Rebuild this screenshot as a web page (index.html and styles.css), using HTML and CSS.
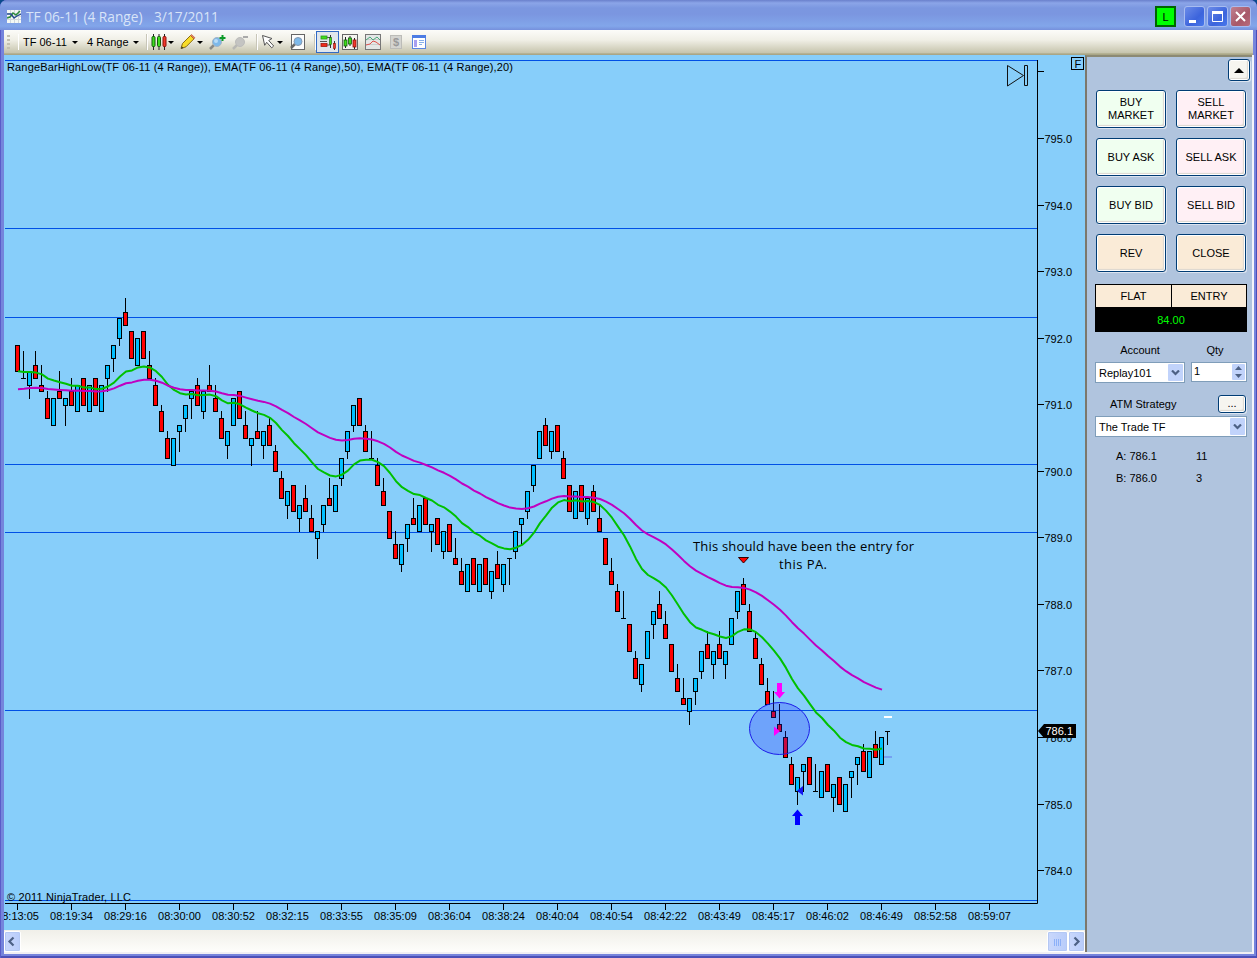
FILE: index.html
```html
<!DOCTYPE html>
<html lang="en">
<head>
    <meta charset="UTF-8">
    <title>TF 06-11 (4 Range) 3/17/2011</title>
    <link rel="stylesheet" href="styles.css">
</head>
<body>
    <div class="window">
        <div class="titlebar">
            <svg class="app-icon" width="14" height="13" viewBox="0 0 14 13">
                <rect width="14" height="13" fill="#f4f8f4"/>
                <path d="M0 3.5h14M0 6.5h14M0 9.5h14M3.5 0v13M7.5 0v13M11.5 0v13" stroke="#d0d8dc" fill="none"/>
                <path d="M0 8l3-1 3-4 3 2 4-4" stroke="#2c8a3a" stroke-width="1.5" fill="none"/>
                <path d="M0 4h4l3 4 3-2 4-2" stroke="#234a8c" stroke-width="1.3" fill="none"/>
            </svg>
            <span class="title">TF 06-11 (4 Range)</span>
            <span class="title title-date">3/17/2011</span>
            <div class="link-box">L</div>
            <div class="win-btn"><svg width="19" height="19"><rect x="4" y="13" width="7" height="3" fill="#fff"/></svg></div>
            <div class="win-btn"><svg width="19" height="19"><path d="M4.5 5v9.5h10V5" fill="none" stroke="#fff"/><rect x="4" y="4" width="11" height="3" fill="#fff"/></svg></div>
            <div class="win-btn win-close"><svg width="19" height="19"><path d="M5 5l9 9M14 5l-9 9" stroke="#fff" stroke-width="2"/></svg></div>
        </div>

        <div class="toolbar">
            <div class="grip"></div>
            <div class="sep sep-first"></div>
            <span class="tool-text instrument">TF 06-11</span>
            <i class="caret"></i>
            <span class="tool-text interval">4 Range</span>
            <i class="caret"></i>
            <div class="sep sep-a"></div>
            <svg class="ic-bars" width="16" height="18" viewBox="0 0 16 18">
                <path d="M2.500 1v16M8 1v16M13.500 1v16" stroke="#222"/>
                <rect x="1" y="3.500" width="3" height="10" rx="1" fill="#3fdc1c" stroke="#145a0c"/>
                <rect x="6.500" y="3.500" width="3" height="10" rx="1" fill="#3fdc1c" stroke="#145a0c"/>
                <rect x="12" y="3.500" width="3" height="10" rx="1" fill="#f03a2c" stroke="#8c1008"/>
            </svg>
            <i class="caret caret-tight"></i>
            <svg class="ic-pencil" width="16" height="16" viewBox="0 0 16 16">
                <path d="M1 14.500l1.500-5 8-8 3.500 3.300-8 8z" fill="#f8dc28" stroke="#8a6c10"/>
                <path d="M10.500 1.500l1-1 3.500 3.300-1 1z" fill="#ee8a60" stroke="#b05030" stroke-width=".6"/>
                <path d="M1 14.800l.8-2.600 1.700 1.700z" fill="#333"/>
            </svg>
            <i class="caret caret-tight"></i>
            <svg class="ic-zoom" width="17" height="17" viewBox="0 0 17 17">
                <path d="M1 15l4-4" stroke="#8a8a86" stroke-width="2.500"/>
                <circle cx="8" cy="8" r="4.500" fill="#7db9ea" stroke="#a4b4c4"/>
                <circle cx="7" cy="7" r="2" fill="#b8dcf8"/>
                <path d="M13.500 1v6M10.500 4h6" stroke="#0c9a28" stroke-width="2"/>
            </svg>
            <svg class="ic-zoom-out" width="17" height="17" viewBox="0 0 17 17">
                <path d="M1 15l4-4" stroke="#b8b8b4" stroke-width="2.500"/>
                <circle cx="8" cy="8" r="4.500" fill="#c4c4c2" stroke="#bcbcba"/>
                <path d="M11 3h5" stroke="#aaa" stroke-width="2"/>
            </svg>
            <div class="sep sep-b"></div>
            <svg class="ic-cursor" width="15" height="16" viewBox="0 0 15 16">
                <path d="M1.500 1.500l9.500 3-3.300 2 5 5.500-2 1.800-5-5.500-2 3z" fill="#fff" stroke="#555"/>
            </svg>
            <i class="caret"></i>
            <svg class="ic-page" width="15" height="16" viewBox="0 0 15 16">
                <rect x="1.500" y=".5" width="13" height="15" fill="#fcfcfc" stroke="#666"/>
                <path d="M1 14l4-4" stroke="#666" stroke-width="2.500"/>
                <circle cx="8" cy="7.500" r="4" fill="#7db9ea" stroke="#8498b0"/>
            </svg>
            <div class="sep sep-c"></div>
            <div class="tool-active">
                <svg width="18" height="18" viewBox="0 0 18 18">
                    <rect x="2" y="3" width="6" height="3" fill="#3fdc1c" stroke="#2a9c18" stroke-width=".8"/>
                    <rect x="2" y="10.500" width="6" height="3" fill="#f02a1c" stroke="#a01810" stroke-width=".8"/>
                    <path d="M8 4.500h4M8 12h4M1 8.500h7" stroke="#555"/>
                    <path d="M11.500 2v13M15.500 8v9" stroke="#333"/>
                    <rect x="10.500" y="4.500" width="2" height="7" fill="#3fdc1c" stroke="#145a0c" stroke-width=".6"/>
                    <rect x="14.500" y="10.500" width="2" height="5" fill="#f03a2c" stroke="#8c1008" stroke-width=".6"/>
                </svg>
            </div>
            <svg class="ic-chart" width="16" height="16" viewBox="0 0 16 16">
                <rect x=".5" y=".5" width="15" height="15" fill="#f4f4f0" stroke="#666"/>
                <path d="M3.500 3v11M8 2v10M12.500 4v11" stroke="#222"/>
                <rect x="2" y="6" width="3" height="6" fill="#3fdc1c" stroke="#145a0c" stroke-width=".8"/>
                <rect x="6.500" y="4" width="3" height="6" fill="#3fdc1c" stroke="#145a0c" stroke-width=".8"/>
                <rect x="11" y="6" width="3" height="7" fill="#f03a2c" stroke="#8c1008" stroke-width=".8"/>
            </svg>
            <svg class="ic-chart" width="16" height="16" viewBox="0 0 16 16">
                <rect x=".5" y=".5" width="15" height="15" fill="#e4e6e6" stroke="#777"/>
                <path d="M1 5.500h14M1 10.500h14" stroke="#ccc"/>
                <path d="M1 6l4-3 3 3 4-3 3 3" stroke="#4ba878" fill="none"/>
                <path d="M1 11l4-1 3-3 3 1 4 3" stroke="#e0504c" fill="none"/>
            </svg>
            <svg class="ic-chart" width="16" height="16" viewBox="0 0 16 16">
                <rect x="2.500" y="1.500" width="11" height="13" fill="#d4d4d0" stroke="#bcbcb8"/>
                <text class="dollar" x="8" y="12" text-anchor="middle">$</text>
            </svg>
            <svg class="ic-chart" width="16" height="16" viewBox="0 0 16 16">
                <rect x="1.500" y="1.500" width="13" height="13" fill="#fff" stroke="#5c86e0"/>
                <rect x="1" y="1" width="14" height="3" fill="#4c7ce4"/>
                <rect x="3" y="6" width="3" height="7" fill="#a8a0f0"/>
                <path d="M8 6.500h5M8 8.500h5M8 10.500h3" stroke="#88b0e8"/>
            </svg>
        </div>

        <div class="content">
            <div class="chart-pane">
                <svg class="chart" width="1081" height="875" viewBox="4 55 1081 875">
                    <g id="levels" class="level"></g>
                    <g id="axes" class="axis"></g>
                    <g id="labels" class="label"></g>
                    <g id="bars"></g>
                    <polyline id="ema20" class="ema ema-fast"/>
                    <polyline id="ema50" class="ema ema-slow"/>

                    <text class="label" x="7" y="71" textLength="506">RangeBarHighLow(TF 06-11 (4 Range)), EMA(TF 06-11 (4 Range),50), EMA(TF 06-11 (4 Range),20)</text>
                    <text class="label" x="7" y="901" textLength="124">© 2011 NinjaTrader, LLC</text>

                    <!-- trade annotations -->
                    <text class="note" x="693" y="551" textLength="221">This should have been the entry for</text>
                    <text class="note" x="779" y="569" textLength="48">this PA.</text>
                    <path d="M738.500 557.500h10l-5 5.500z" fill="#f00" stroke="#300"/>
                    <ellipse cx="779.500" cy="728.500" rx="30" ry="26" fill="#2424ff" fill-opacity=".25" stroke="#1c1ce8"/>
                    <path d="M777 683h5v9h3l-5.500 6.500-5.500-6.500h3z" fill="#f0f"/>
                    <path d="M774 726.500v9.500l6-4.700z" fill="#f0f"/>
                    <path d="M803 786v9.500l-6-4.700z" fill="#1414f0"/>
                    <path d="M795 825h5v-9h3l-5.500-6.500-5.500 6.500h3z" fill="#00f"/>
                    <path d="M884 717h8" stroke="#fff" stroke-width="2"/>
                    <path d="M884 757h8" stroke="#6f92ee" stroke-width="1.500"/>

                    <!-- last price -->
                    <path d="M1038 731l6-7h32v14h-32z"/>
                    <text class="label last-price" x="1045.500" y="735">786.1</text>

                    <path d="M1007.500 65.500v20.500l16-10.500zM1024.500 65.500h3v20h-3z" fill="none" stroke="#111"/>
                    <rect x="1071.500" y="57.500" width="12" height="12" fill="none" stroke="#000"/>
                    <text class="label" x="1074.500" y="68">F</text>
                </svg>
                <div class="scrollbar">
                    <div class="scroll-btn"><svg width="15" height="19"><path d="M8.500 5.500l-4 4 4 4" fill="none" stroke="#4d6185" stroke-width="2.200"/></svg></div>
                    <div class="track"></div>
                    <div class="scroll-btn thumb"><svg width="19" height="19"><path d="M6.500 7v7M8.500 7v7M10.500 7v7M12.500 7v7" stroke="#8cb0f8"/></svg></div>
                    <div class="scroll-btn"><svg width="15" height="19"><path d="M5.500 5.500l4 4-4 4" fill="none" stroke="#4d6185" stroke-width="2.200"/></svg></div>
                </div>
            </div>

            <div class="trader">
                <div class="collapse-row"><div class="btn collapse"><svg width="10" height="5"><path d="M0 5l5-5 5 5z"/></svg></div></div>
                <div class="orders">
                    <div class="btn buy">BUY<br>MARKET</div>
                    <div class="btn sell">SELL<br>MARKET</div>
                    <div class="btn buy">BUY ASK</div>
                    <div class="btn sell">SELL ASK</div>
                    <div class="btn buy">BUY BID</div>
                    <div class="btn sell">SELL BID</div>
                    <div class="btn neutral">REV</div>
                    <div class="btn neutral">CLOSE</div>
                </div>
                <div class="position">
                    <div class="cell">FLAT</div>
                    <div class="cell">ENTRY</div>
                    <div class="pnl">84.00</div>
                </div>
                <div class="row captions">
                    <span class="cap-account">Account</span>
                    <span class="cap-qty">Qty</span>
                </div>
                <div class="row">
                    <div class="field account"><span>Replay101</span><div class="drop"><svg width="9" height="6"><path d="M1 .5l3.500 3.500 3.500-3.500" fill="none" stroke="#4d6185" stroke-width="2.200"/></svg></div></div>
                    <div class="field qty"><span>1</span><div class="drop spin"><svg width="9" height="14"><path d="M1 5l3.500-4 3.500 4zM1 9l3.500 4 3.500-4z" fill="#4d6185"/></svg></div></div>
                </div>
                <div class="row atm-row">
                    <span>ATM Strategy</span>
                    <div class="btn more">...</div>
                </div>
                <div class="field"><span>The Trade TF</span><div class="drop"><svg width="9" height="6"><path d="M1 .5l3.500 3.500 3.500-3.500" fill="none" stroke="#4d6185" stroke-width="2.200"/></svg></div></div>
                <div class="quotes">
                    <span>A: 786.1</span><span>11</span>
                    <span>B: 786.0</span><span>3</span>
                </div>
            </div>
        </div>
    </div>

    <script src="chart.js"></script>
</body>
</html>
```
FILE: chart.js
```js
// Range bars as [open, close], in ticks (0.1) above 785.0.
// A bar always spans 4 ticks and closes on its high or its low.
// The last bar is still open, its third value is the low so far.
const bars = [
    [69,65],[64,64],[63,65],[66,64],[63,62],[61,58],[57,61],[62,61],[60,61],[62,60],
    [59,63],[64,60],[59,63],[64,60],[59,63],[64,66],[67,69],[70,73],[74,72],[71,67],
    [66,70],[71,67],[66,64],[63,60],[59,56],[55,52],[51,55],[56,57],[58,60],[61,62],
    [63,60],[59,62],[63,62],[61,59],[58,55],[54,56],[57,61],[62,58],[57,55],[54,55],
    [56,55],[54,56],[57,54],[53,50],[49,46],[45,47],[48,44],[43,45],[46,44],[43,41],
    [40,41],[42,45],[46,45],[44,48],[49,52],[53,56],[57,60],[61,57],[56,53],[52,52],
    [51,48],[47,45],[44,40],[39,37],[36,39],[40,42],[43,42],[41,45],[46,42],[41,42],
    [43,39],[38,41],[42,38],[37,36],[35,33],[32,36],[37,33],[32,36],[37,33],[32,35],
    [36,34],[33,36],[37,37,33],[38,41],[42,43],[44,47],[48,51],[52,56],[57,54],[53,56],
    [57,53],[52,49],[48,44],[43,47],[48,44],[43,46],[47,44],[43,41],[40,36],[35,33],
    [32,29],[28,28],[27,23],[22,19],[18,21],[22,26],[27,29],[30,28],[27,25],[24,20],
    [19,17],[16,15],[14,16],[17,19],[20,23],[24,22],[21,23],[24,22],[21,23],[24,28],
    [29,32],[33,30],[29,26],[25,22],[21,18],[17,15],[14,13],[12,11],[10,7],[6,3],
    [2,4],[5,6],[7,3],[2,2],[1,5],[6,2],[1,3],[4,0],[-1,3],[4,5],
    [6,7],[8,5],[4,8],[9,7],[6,10],[11,11,9]
];
const times = ['08:13:05', '08:19:34', '08:29:16', '08:30:00', '08:30:52', '08:32:15',
    '08:33:55', '08:35:09', '08:36:04', '08:38:24', '08:40:04', '08:40:54', '08:42:22',
    '08:43:49', '08:45:17', '08:46:02', '08:46:49', '08:52:58', '08:59:07'];
const levels = [60, 228, 317, 464, 532, 710, 900];

const rawY = t => 804 - 6.655 * t;
const y = t => Math.round(rawY(t)) + 0.5;
const x = i => 17.5 + 6 * i;

function add(parent, tag, attrs, text) {
    const el = document.createElementNS('http://www.w3.org/2000/svg', tag);
    for (const k in attrs) el.setAttribute(k, attrs[k]);
    if (text) el.textContent = text;
    document.getElementById(parent).appendChild(el);
}

levels.forEach(l => add('levels', 'path', { d: `M5 ${l + 0.5}H1037` }));

// axes
add('axes', 'path', { d: 'M1037.5 60V903.5H5' });
for (let p = 784; p <= 796; p++) {
    const py = Math.floor(rawY((p - 785) * 10)) + 0.5;
    add('axes', 'path', { d: `M1038 ${py}h6` });
    if (p < 796) add('labels', 'text', { x: 1044.5, y: py + 4 }, p.toFixed(1));
}
times.forEach((t, k) => {
    add('axes', 'path', { d: `M${x(9 * k)} 904v6` });
    add('labels', 'text', { x: x(9 * k), y: 920, 'text-anchor': 'middle' }, t);
});

// bars
bars.forEach(([open, close, lowest], i) => {
    const up = close > open || lowest !== undefined;
    const high = up ? close : close + 4;
    const low = lowest !== undefined ? lowest : high - 4;
    add('bars', 'path', { class: 'wick', d: `M${x(i)} ${y(high) - 0.5}V${y(low) + 0.5}` });
    if (open === close) {
        add('bars', 'path', { class: 'wick', d: `M${x(i) - 2.5} ${y(open)}h5` });
    } else {
        const top = y(Math.max(open, close));
        add('bars', 'rect', {
            class: up ? 'up' : 'down', x: x(i) - 2, y: top, width: 4,
            height: y(Math.min(open, close)) - top
        });
    }
});

// moving averages
function ema(id, period, seed) {
    let v = seed;
    const points = [];
    for (let i = 0; i < bars.length - 1; i++) {
        if (i > 0) v += (bars[i][1] - v) * 2 / (period + 1);
        points.push(`${x(i) + 0.5},${(rawY(v) + 0.5).toFixed(1)}`);
    }
    document.getElementById(id).setAttribute('points', points.join(' '));
}
ema('ema20', 20, 65.1);
ema('ema50', 50, 62.4);
```
FILE: styles.css
```css
* {
    box-sizing: border-box;
}
body {
    margin: 0;
    background: #0a4a8c;
    font-family: "Liberation Sans", Arial, sans-serif;
    font-size: 11px;
    color: #000;
}
.window {
    width: 1257px;
    height: 958px;
    display: flex;
    flex-direction: column;
    background: #7584dc;
    border-radius: 7px 7px 0 0;
    box-shadow: inset 1px 0 #5a5cc8, inset -1px 0 #4a4cb8, inset 0 -2px #4c50b8;
    overflow: hidden;
}

/* title bar */
.titlebar {
    height: 30px;
    flex: none;
    display: flex;
    align-items: center;
    padding: 3px 6px 0 7px;
    background: linear-gradient(#6a80cc, #8ba5e8 3px, #7b97e0 8px, #7b96e0 14px, #82a6ea 26px, #7690dc 30px);
}
.app-icon {
    margin-right: 5px;
}
.title {
    font-family: "Open Sans", sans-serif;
    font-weight: 500;
    font-size: 13.7px;
    width: 128px;
    white-space: nowrap;
    color: #d8e4f8;
}
.title-date {
    flex: 1;
}
.link-box {
    width: 21px;
    height: 21px;
    border: 2px solid #006400;
    background: #0f0;
    text-align: center;
    line-height: 18px;
    margin-right: 6px;
}
.win-btn {
    width: 21px;
    height: 21px;
    margin-left: 2px;
    border: 1px solid #a8bcf0;
    border-radius: 3px;
    background: linear-gradient(135deg, #6c8ce8, #3c64dc 60%, #4878ec);
}
.win-btn svg {
    display: block;
}
.win-close {
    background: linear-gradient(135deg, #c08090, #a85868 60%, #b86c7c);
}

/* toolbar */
.toolbar {
    height: 26px;
    flex: none;
    margin: 0 4px 0 4px;
    padding: 0 0 2px 3px;
    display: flex;
    align-items: center;
    background: linear-gradient(#fcfcf9, #f0efe6 10px, #c6c4ac 23px, #a29f7c 24px, #b0ad90 25px);
}
.toolbar > * {
    flex: none;
}
.grip {
    width: 3px;
    height: 14px;
    background: repeating-linear-gradient(#c4c0b0 0 2px, transparent 2px 4px);
}
.sep {
    width: 1px;
    height: 16px;
    background: #c8c6b8;
    box-shadow: 1px 0 #fff;
}
.sep-first { margin-left: 7px; background: none; }
.sep-a { margin: 0 4px 0 7px; }
.sep-b { margin: 0 4px 0 7px; }
.sep-c { margin: 0 1px 0 9px; }
.tool-text {
    white-space: nowrap;
}
.instrument {
    margin-left: 5px;
    width: 49px;
}
.interval {
    margin-left: 9px;
    width: 46px;
}
.caret {
    border: 3px solid transparent;
    border-top-color: #000;
    border-bottom: 0;
    width: 6px;
}
.caret-tight {
    margin-left: 1px;
}
.ic-pencil { margin-left: 6px; }
.ic-zoom { margin-left: 6px; }
.ic-zoom-out { margin-left: 6px; }
.ic-cursor + .caret { margin-left: 1px; }
.ic-page { margin-left: 7px; }
.ic-chart { margin-left: 3px; }
.ic-chart + .ic-chart { margin-left: 7px; }
.dollar {
    font-weight: bold;
    font-size: 11px;
    fill: #999;
}
.tool-active {
    width: 23px;
    height: 22px;
    border: 1px solid #316ac5;
    background: #e0e6ec;
    padding: 1px 2px;
}

/* chart */
.content {
    flex: 1;
    display: flex;
    margin: -1px 3px 4px 4px;
    min-height: 0;
    border-right: 2px solid #f4f4fa;
    border-bottom: 2px solid #f0eff4;
}
.chart-pane {
    width: 1081px;
    flex: none;
    display: flex;
    flex-direction: column;
}
.chart {
    display: block;
    flex: none;
    background: #87cefa;
}
.level {
    stroke: #0050e6;
}
.axis {
    stroke: #000;
    fill: none;
}
.label {
    font-size: 11px;
}
.note {
    font-family: "Open Sans", sans-serif;
    font-size: 13px;
}
.last-price {
    fill: #fff;
}
.wick {
    stroke: #000;
}
.up {
    fill: #00bfff;
    stroke: #000;
}
.down {
    fill: #f00;
    stroke: #000;
}
.ema {
    fill: none;
    stroke-width: 2;
    stroke-linejoin: round;
}
.ema-fast {
    stroke: #00c000;
}
.ema-slow {
    stroke: #c000c0;
}

/* scrollbar */
.scrollbar {
    flex: 1;
    display: flex;
    align-items: center;
    background: linear-gradient(#f0efe9, #fefefb);
}
.track {
    flex: 1;
}
.scroll-btn {
    width: 17px;
    height: 21px;
    border: 1px solid #fff;
    border-radius: 2px;
    background: linear-gradient(90deg, #cad8fc, #b8ccfa);
    box-shadow: inset 0 0 0 1px #b4c8f4;
}
.scroll-btn svg {
    display: block;
}
.thumb {
    width: 21px;
}

/* order entry */
.trader {
    flex: 1;
    padding: 2px 5px 0 8px;
    background: #b0c4de;
    border-left: 2px solid #7c786c;
    border-top: 2px solid #8c8a74;
}
.btn {
    display: flex;
    align-items: center;
    justify-content: center;
    text-align: center;
    line-height: 13px;
    border: 1px solid #003c74;
    border-radius: 3px;
    background: #f6f5f0;
    box-shadow: inset 0 0 0 1px #fff, inset -2px -2px 1px #dcd8d0, 1px 1px #dce4f0;
}
.collapse-row {
    display: flex;
    justify-content: flex-end;
    margin-right: -3px;
}
.collapse {
    width: 22px;
    height: 22px;
}
.orders {
    display: grid;
    grid-template-columns: 70px 70px;
    grid-auto-rows: 38px;
    gap: 10px;
    margin: 9px 0 0 1px;
}
.buy { background: #f0fff0; }
.sell { background: #fff0f5; }
.neutral { background: #faebd7; }
.position {
    display: grid;
    grid-template-columns: 75px 74px;
    grid-template-rows: 22px 23px;
    gap: 1px;
    width: 152px;
    margin-top: 12px;
    border: 1px solid #000;
    background: #000;
    text-align: center;
    line-height: 23px;
}
.cell {
    background: #faebd7;
}
.pnl {
    grid-column: 1 / 3;
    color: #0f0;
    line-height: 25px;
}
.row {
    display: flex;
    width: 152px;
    gap: 6px;
}
.captions {
    height: 30px;
    line-height: 36px;
    gap: 0;
}
.cap-account {
    width: 90px;
    text-align: center;
}
.cap-qty {
    width: 60px;
    text-align: center;
}
.field {
    display: flex;
    justify-content: space-between;
    width: 152px;
    height: 21px;
    border: 1px solid #7f9db9;
    background: #fff;
    padding: 1px 1px 1px 3px;
    line-height: 18px;
}
.account {
    width: 90px;
}
.qty {
    width: 56px;
    height: 20px;
    padding-left: 2px;
    line-height: 15px;
}
.drop {
    display: flex;
    align-items: center;
    justify-content: center;
    width: 15px;
    border-radius: 1px;
    background: #c1d3fb;
}
.spin {
    width: 13px;
}
.atm-row {
    justify-content: space-between;
    align-items: center;
    height: 33px;
    padding: 9px 1px 0 15px;
}
.more {
    width: 28px;
    height: 18px;
    margin-top: -1px;
}
.quotes {
    display: grid;
    grid-template-columns: 80px 40px;
    grid-auto-rows: 22px;
    line-height: 22px;
    margin: 8px 0 0 21px;
}
```
